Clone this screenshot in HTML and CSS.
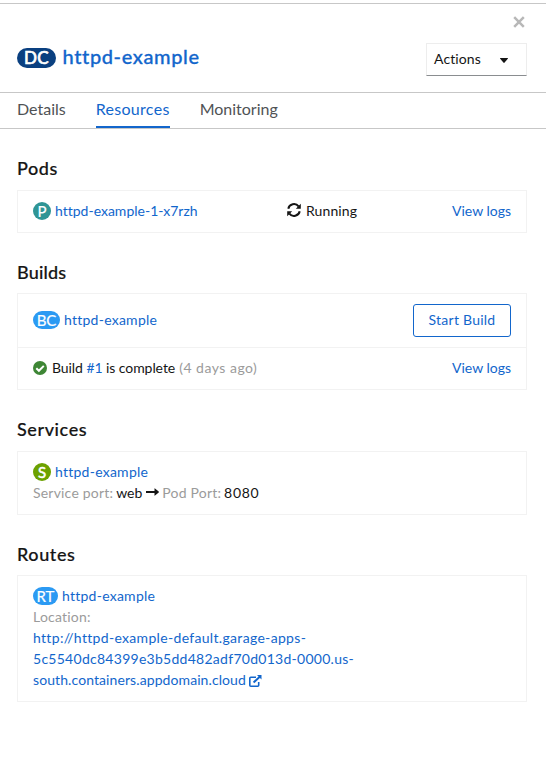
FILE: index.html
```
<!DOCTYPE html>
<html lang="en">
<head>
<meta charset="utf-8">
<title>httpd-example</title>
<link rel="stylesheet" href="styles.css">
</head>
<body>
<aside class="panel">
  <header class="header">
    <div class="close-row">
      <button class="close" aria-label="Close"><svg width="12" height="12" viewBox="0 0 12 12"><path d="M1.2 1.2l9.6 9.6M10.8 1.2l-9.6 9.6"/></svg></button>
    </div>
    <div class="title-row">
      <span class="badge badge-dc">DC</span>
      <h1><a>httpd-example</a></h1>
      <button class="actions"><span>Actions</span><svg width="8" height="5" viewBox="0 0 8 5"><path d="M0.4 0h7.2q.7 0 .2.7L4.6 4.6q-.6.6-1.2 0L.2.7Q-.3 0 .4 0z"/></svg></button>
    </div>
  </header>
  <nav class="tabs">
    <a class="tab">Details</a>
    <a class="tab active">Resources</a>
    <a class="tab">Monitoring</a>
  </nav>
  <main class="content">
    <section>
      <h2>Pods</h2>
      <div class="card">
        <div class="row pod-row">
          <div class="name"><span class="badge badge-p">P</span><a class="pod-link">httpd-example-1-x7rzh</a></div>
          <div class="status"><svg class="sync" width="14" height="14" viewBox="0 0 14 14"><path class="arc" d="M1.3 5.8A5.8 5.8 0 0 1 11.6 3.4M12.7 8.2A5.8 5.8 0 0 1 2.4 10.6"/><path d="M13.8.8v5H8.8zM.2 13.2v-5h5z"/></svg><span>Running</span></div>
          <a class="logs">View logs</a>
        </div>
      </div>
    </section>
    <section>
      <h2 class="builds-title">Builds</h2>
      <div class="card">
        <div class="row build-row">
          <div class="name"><span class="badge badge-bc">BC</span><a>httpd-example</a></div>
          <button class="start">Start Build</button>
        </div>
        <div class="row divided">
          <div class="build-status"><svg class="check" width="14" height="14" viewBox="0 0 14 14"><circle cx="7" cy="7" r="7"/><path d="M3.3 7.2l2.6 2.6 4.9-4.9"/></svg><span class="build-text">Build <a>#1</a> is complete</span><span class="muted ago">(4 days ago)</span></div>
          <a class="logs">View logs</a>
        </div>
      </div>
    </section>
    <section class="services">
      <h2>Services</h2>
      <div class="card">
        <div class="block">
          <div class="name"><span class="badge badge-s">S</span><a>httpd-example</a></div>
          <div class="ports"><span class="muted">Service port:</span><span class="port-name">web</span><svg class="arrow" width="13" height="8" viewBox="0 0 13 8"><path d="M0 3h8.5V.6q0-.6.5-.2l3.7 3.2q.4.4 0 .8L9 7.6q-.5.4-.5-.2V5H0z"/></svg><span class="muted">Pod Port:</span><span class="port-number">8080</span></div>
        </div>
      </div>
    </section>
    <section>
      <h2>Routes</h2>
      <div class="card">
        <div class="block">
          <div class="name"><span class="badge badge-rt">RT</span><a>httpd-example</a></div>
          <div class="muted">Location:</div>
          <a class="url">http://httpd-example-default.garage-apps-<br><span class="url-mid">5c5540dc84399e3b5dd482adf70d013d-0000.us-</span><br><span class="url-end">south.containers.appdomain.cloud</span><svg class="ext" width="13" height="12" viewBox="0 0 13 12"><path class="box" d="M7 2.3H1.8Q.8 2.3.8 3.3v6.9q0 1 1 1h6.9q1 0 1-1V7"/><path class="line" d="M4.6 7.4L11 1.5"/><path d="M8 0h4.5v4.5z"/></svg></a>
        </div>
      </div>
    </section>
  </main>
</aside>
</body>
</html>
```
FILE: styles.css
```
* { box-sizing: border-box; }
body { margin: 0; background: #fff; color: #151515; font: 14px/21px Lato, "Open Sans", sans-serif; font-variant-ligatures: none; }
a { color: #1266cc; text-decoration: none; }
button { font: inherit; color: inherit; background: #fff; padding: 0; border: 0; }
svg { display: block; fill: currentColor; flex: none; }
h1, h2 { margin: 0; font-weight: 500; }

.panel { padding-top: 3px; }
.header { height: 90px; border-top: 1px solid #c7c7c7; border-bottom: 1px solid #c7c7c7; }
.close-row { display: flex; justify-content: flex-end; height: 39px; padding: 12px 21px 0 0; }
.close { height: 12px; color: #b8b8b8; }
.close path { fill: none; stroke: currentColor; stroke-width: 2.5; }
.title-row { display: flex; align-items: flex-start; padding: 0 19px 0 17px; }
.title-row h1 { margin: 1px auto 0 6.5px; font-size: 20px; line-height: 24px; letter-spacing: .62px; -webkit-text-stroke: .3px; }
.actions { display: flex; align-items: center; justify-content: space-between; width: 101px; height: 33px; padding: 0 18px 0 7px; border: 1px solid #ededed; border-bottom-color: #8a8d90; letter-spacing: .1px; }
.actions span { padding-bottom: 2px; }
.actions svg { margin-top: 2px; }

.badge { display: inline-flex; align-items: center; justify-content: center; height: 18px; border-radius: 10px; color: #fff; font-size: 15px; line-height: 18px; -webkit-text-stroke: .2px; }
.badge-dc { width: 39px; height: 20px; margin-top: 5px; padding-bottom: 1px; background: #0a4080; font-size: 17px; -webkit-text-stroke: .7px; letter-spacing: .4px; }
.badge-p { width: 18px; background: #2f9595; }
.badge-bc { width: 27px; background: #2b9af3; }
.badge-s { width: 18px; background: #6ca100; -webkit-text-stroke: .5px; }
.badge-rt { width: 25px; background: #2b9af3; }

.tabs { display: flex; gap: 30px; height: 36px; padding-left: 17px; border-bottom: 1px solid #c7c7c7; }
.tab { height: 35px; color: #4f5255; font-size: 16px; line-height: 32px; }
.tab.active { color: #1266cc; border-bottom: 2px solid #1266cc; letter-spacing: .3px; }

.content { padding: 1px 19px 0 17px; }
section { padding-top: 28px; }
.services { padding-top: 29px; }
h2 { height: 32px; font-size: 18px; line-height: 22px; letter-spacing: .6px; -webkit-text-stroke: .2px; }
section:first-child h2 { margin-top: -1px; height: 33px; }
.services h2 { margin-top: -1px; height: 33px; }
.builds-title { letter-spacing: .2px; }
.card { border: 1px solid #f2f2f2; }
.row { display: flex; align-items: center; justify-content: space-between; height: 41px; padding: 0 15px; }
.row > :not(.start) { margin-bottom: 2px; }
.pod-row { display: grid; grid-template-columns: 254px 1fr auto; }
.build-row { height: 53px; }
.divided { height: 42px; border-top: 1px solid #f2f2f2; }
.block { padding: 9px 15px 11px; }
.name, .status, .build-status { display: flex; align-items: center; height: 21px; }
.name { gap: 4px; letter-spacing: .25px; }
.name .badge { letter-spacing: 0; }
.name .pod-link { letter-spacing: 0; }
.status { gap: 5px; letter-spacing: .1px; }
.sync { margin-bottom: 1px; }
.sync .arc { fill: none; stroke: currentColor; stroke-width: 2; }
.start { width: 98px; height: 33px; padding-bottom: 2px; border: 1px solid #1266cc; border-radius: 3px; color: #1266cc; letter-spacing: .25px; }
.muted { color: #9b9b9b; letter-spacing: .2px; }
.check { margin-right: 5px; color: #3e8635; }
.check path { fill: none; stroke: #fff; stroke-width: 2; }
.build-text { letter-spacing: -.07px; }
.ago { margin-left: 4px; letter-spacing: .5px; }
.ports { display: flex; align-items: center; }
.port-name { margin: 0 4px 0 3px; }
.arrow { margin: 0 3px 2px 0; }
.port-number { margin-left: 3px; letter-spacing: .7px; }
.url { display: block; letter-spacing: .32px; }
.url-mid { letter-spacing: .27px; }
.url-end { letter-spacing: .09px; }
.ext { display: inline-block; margin-left: 3px; vertical-align: -2px; }
.ext .box { fill: none; stroke: currentColor; stroke-width: 1.6; }
.ext .line { fill: none; stroke: currentColor; stroke-width: 2; }
```
